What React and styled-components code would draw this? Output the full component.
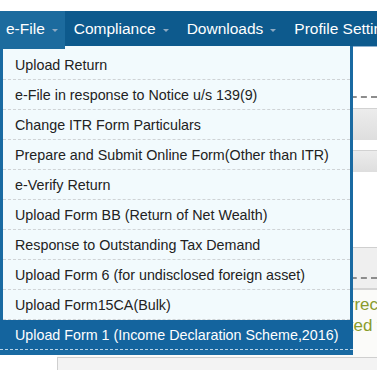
import React from "react";
import styled, { createGlobalStyle } from "styled-components";

const GlobalStyle = createGlobalStyle`
    html, body {
        margin: 0;
        padding: 0;
        background: #fff;
        font-family: "Liberation Sans", Arial, sans-serif;
        overflow: hidden;
    }
`;

const Page = styled.div`
    width: 377px;
    height: 370px;
    padding-top: 11px;
    box-sizing: border-box;
    position: relative;
    overflow: hidden;
`;

const NavBar = styled.div`
    display: flex;
    height: 35px;
    background: #0d5a8d;
    border-bottom: 1px solid #8fb2cf;
    white-space: nowrap;
`;

const NavItem = styled.div`
    display: flex;
    align-items: center;
    gap: 7px;
    padding: 0 ${props => props.first ? "7px" : "9px"} 0 ${props => props.first ? "6px" : "9px"};
    color: #fff;
    font-size: 15.5px;
    background: ${props => props.active ? "#1c6b9e" : "transparent"};
    margin-bottom: ${props => props.active ? "-3px" : "0"};
    padding-bottom: ${props => props.active ? "3px" : "0"};
    position: relative;
    z-index: 2;
`;

const Caret = styled.span`
    width: 0;
    height: 0;
    margin-top: 4px;
    border-left: 3px solid transparent;
    border-right: 3px solid transparent;
    border-top: 3px solid #8eaac3;
`;

const Menu = styled.ul`
    position: absolute;
    top: 46px;
    left: 0;
    width: 353px;
    box-sizing: border-box;
    margin: 0;
    padding: 4px 0 0;
    list-style: none;
    background: #f2fafd;
    border: 3px solid #196aa2;
    border-top: none;
    border-bottom-width: 5px;
    z-index: 1;
`;

const MenuItem = styled.li`
    height: 30px;
    box-sizing: border-box;
    display: flex;
    align-items: center;
    font-size: 14.3px;
    color: ${props => props.active ? "#fff" : "#222"};
    background: ${props => props.active ? "#14649e" : "transparent"};
    border-bottom: 1px dashed ${props => props.active ? "#b9d2e6" : "#cfd3d6"};
    margin: 0 ${props => props.active ? "-3px" : "0"};
    padding-left: ${props => props.active ? "15px" : "12px"};
    white-space: nowrap;
`;

const Content = styled.div`
    display: flex;
    flex-direction: column;
    margin-left: 57px;
`;

const Spacer = styled.div`
    height: ${props => props.h}px;
`;

const DottedRule = styled.div`
    border-top: 2px dashed #8d8d8d;
    margin-top: ${props => props.top || 0}px;
`;

const GreyBar = styled.div`
    height: ${props => props.h}px;
    background: linear-gradient(#ececec, #dedede);
    border-top: 1px solid #d2d2d2;
    box-sizing: border-box;
`;

const Section = styled.div`
    height: 43px;
    box-sizing: border-box;
    background: #efefef;
    border-top: 1px solid #cfcfcf;
    border-bottom: 2px solid #d4d4d4;
`;

const Message = styled.div`
    height: 67px;
    box-sizing: border-box;
    padding: 4px 0 0 270px;
    background: #fbfbf9;
    color: #8a9b2c;
    font-size: 17px;
    line-height: 21px;
    white-space: nowrap;
`;

const FooterBox = styled.div`
    height: 20px;
    background: #f3f3f3;
    border-top: 1px solid #cfcfcf;
    border-left: 1px solid #cfcfcf;
`;

const navItems = ["e-File", "Compliance", "Downloads", "Profile Settings"];

const menuItems = [
    "Upload Return",
    "e-File in response to Notice u/s 139(9)",
    "Change ITR Form Particulars",
    "Prepare and Submit Online Form(Other than ITR)",
    "e-Verify Return",
    "Upload Form BB (Return of Net Wealth)",
    "Response to Outstanding Tax Demand",
    "Upload Form 6 (for undisclosed foreign asset)",
    "Upload Form15CA(Bulk)",
    "Upload Form 1 (Income Declaration Scheme,2016)"
];

const App = () => {
    return (
        <Page>
            <GlobalStyle />
            <NavBar>
                {navItems.map((item, i) => (
                    <NavItem key={item} first={i === 0} active={i === 0}>
                        {item}
                        {i < 3 && <Caret />}
                    </NavItem>
                ))}
            </NavBar>

            <Content>
                <Spacer h={49} />
                <DottedRule />
                <Spacer h={10} />
                <GreyBar h={32} />
                <Spacer h={10} />
                <GreyBar h={22} />
                <Spacer h={75} />
                <Section>
                    <DottedRule top={29} />
                </Section>
                <Message>
                    <div>Correct</div>
                    <div>Listed for</div>
                </Message>
                <FooterBox />
            </Content>

            <Menu>
                {menuItems.map((item, i) => (
                    <MenuItem key={item} active={i === menuItems.length - 1}>
                        {item}
                    </MenuItem>
                ))}
            </Menu>
        </Page>
    );
};

export default App;
